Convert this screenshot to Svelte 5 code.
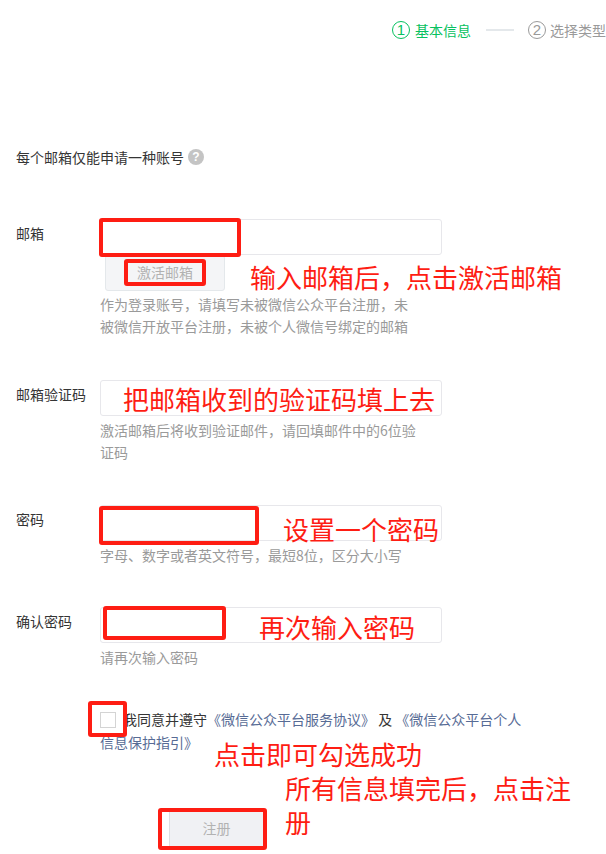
<script>
  const fields = [
    { label: "邮箱", hint: ["作为登录账号，请填写未被微信公众平台注册，未", "被微信开放平台注册，未被个人微信号绑定的邮箱"], activate: true },
    { label: "邮箱验证码", hint: ["激活邮箱后将收到验证邮件，请回填邮件中的6位验", "证码"] },
    { label: "密码", hint: ["字母、数字或者英文符号，最短8位，区分大小写"] },
    { label: "确认密码", hint: ["请再次输入密码"] },
  ];

  // annotations drawn on top of the screenshot
  const boxes = [
    { x: 99, y: 218, w: 142, h: 39 },
    { x: 124, y: 259, w: 82, h: 27 },
    { x: 99, y: 506, w: 160, h: 39 },
    { x: 103, y: 606, w: 123, h: 34 },
    { x: 88, y: 701, w: 39, h: 36 },
    { x: 158, y: 808, w: 109, h: 42 },
  ];
  const notes = [
    { x: 250, y: 261, text: "输入邮箱后，点击激活邮箱" },
    { x: 123, y: 383, text: "把邮箱收到的验证码填上去" },
    { x: 283, y: 513, text: "设置一个密码" },
    { x: 259, y: 611, text: "再次输入密码" },
    { x: 214, y: 738, text: "点击即可勾选成功" },
    { x: 285, y: 772, text: "所有信息填完后，点击注" },
    { x: 285, y: 806, text: "册" },
  ];
</script>

<div class="page">
  <div class="steps">
    <span class="step active"><span class="num">1</span>基本信息</span>
    <span class="line"></span>
    <span class="step second"><span class="num">2</span>选择类型</span>
  </div>

  <p class="intro">每个邮箱仅能申请一种账号<span class="help">?</span></p>

  <form class="form">
    {#each fields as f}
      <div class="row">
        <span class="label">{f.label}</span>
        <div class="control">
          <div class="input"></div>
          {#if f.activate}
            <div class="activate">激活邮箱</div>
          {/if}
          <div class="hint">
            {#each f.hint as line}
              <div>{line}</div>
            {/each}
          </div>
        </div>
      </div>
    {/each}

    <div class="agree">
      <span class="checkbox"></span>
      <div class="agree-text">
        <span class="indent">我同意并遵守</span><span class="link">《微信公众平台服务协议》</span> 及 <span class="link">《微信公众平台个人</span><br /><span class="link">信息保护指引》</span>
      </div>
    </div>

    <div class="submit">注册</div>
  </form>

  {#each boxes as b}
    <div class="mark" style="left:{b.x}px;top:{b.y}px;width:{b.w}px;height:{b.h}px"></div>
  {/each}
  {#each notes as n}
    <div class="note" style="left:{n.x}px;top:{n.y}px">{n.text}</div>
  {/each}
</div>

<style>
  :global(body) {
    margin: 0;
    background: #fff;
  }
  .page {
    position: relative;
    width: 606px;
    height: 854px;
    overflow: hidden;
    font-family: "Noto Sans CJK SC", "Liberation Sans", sans-serif;
    font-size: 14px;
    color: #353535;
  }
  .steps {
    display: flex;
    align-items: center;
    height: 20px;
    padding: 20px 0 0 392px;
    white-space: nowrap;
  }
  .step {
    display: flex;
    align-items: center;
    gap: 5px;
    line-height: 18px;
    color: #9a9a9a;
  }
  .step.active {
    color: #07c160;
  }
  .step.second {
    gap: 4px;
  }
  .num {
    box-sizing: border-box;
    width: 18px;
    height: 18px;
    border: 1px solid currentColor;
    border-radius: 50%;
    display: flex;
    align-items: center;
    justify-content: center;
    font-size: 15px;
    font-family: "Liberation Sans", sans-serif;
  }
  .line {
    width: 30px;
    height: 2px;
    margin: 0 14px 0 15px;
    background: #e4e8eb;
  }
  .intro {
    display: flex;
    align-items: center;
    gap: 4px;
    margin: 0;
    padding: 107px 0 0 16px;
    height: 20px;
  }
  .help {
    width: 16px;
    height: 16px;
    border-radius: 50%;
    background: #c4c4c4;
    color: #fff;
    font: bold 12px/16px "Liberation Sans", sans-serif;
    text-align: center;
  }
  .form {
    padding: 52px 0 0 16px;
  }
  .row {
    display: flex;
    margin-bottom: 41px;
  }
  .row:nth-child(1) { margin-bottom: 42px; }
  .row:nth-child(3) { margin-bottom: 40px; }
  .row:nth-child(4) { margin-bottom: 39px; }
  .label {
    width: 84px;
    flex: none;
    line-height: 28px;
  }
  .control {
    width: 342px;
  }
  .input {
    box-sizing: border-box;
    height: 36px;
    border: 1px solid #e7e7eb;
    border-radius: 3px;
    background: #fff;
  }
  .activate {
    box-sizing: border-box;
    width: 120px;
    height: 36px;
    margin-left: 5px;
    border: 1px solid #e4e8eb;
    border-radius: 3px;
    background: #f4f5f7;
    color: #b2b2b2;
    line-height: 32px;
    text-align: center;
  }
  .hint {
    margin-top: 3px;
    padding-bottom: 1px;
    color: #9a9a9a;
    line-height: 22px;
  }
  .activate + .hint {
    margin-top: 2px;
  }
  .agree {
    position: relative;
    margin: 0 0 0 84px;
    width: 430px;
  }
  .checkbox {
    position: absolute;
    left: 0;
    top: 4px;
    box-sizing: border-box;
    width: 16px;
    height: 16px;
    border: 1px solid #d4d4d4;
    background: #fff;
  }
  .agree-text {
    line-height: 23px;
  }
  .indent {
    margin-left: 23px;
  }
  .link {
    color: #576b95;
  }
  .submit {
    box-sizing: border-box;
    width: 96px;
    height: 34px;
    margin: 58px 0 0 153px;
    border-left: 1px solid #dcdfe3;
    background: #f0f1f4;
    color: #b2b2b2;
    line-height: 32px;
    text-align: center;
    padding-right: 2px;
  }
  .mark {
    position: absolute;
    box-sizing: border-box;
    border: 4px solid #fe1d13;
    border-radius: 3px;
  }
  .note {
    position: absolute;
    color: #fe1d13;
    font-size: 26px;
    line-height: 32px;
    white-space: nowrap;
  }
</style>
